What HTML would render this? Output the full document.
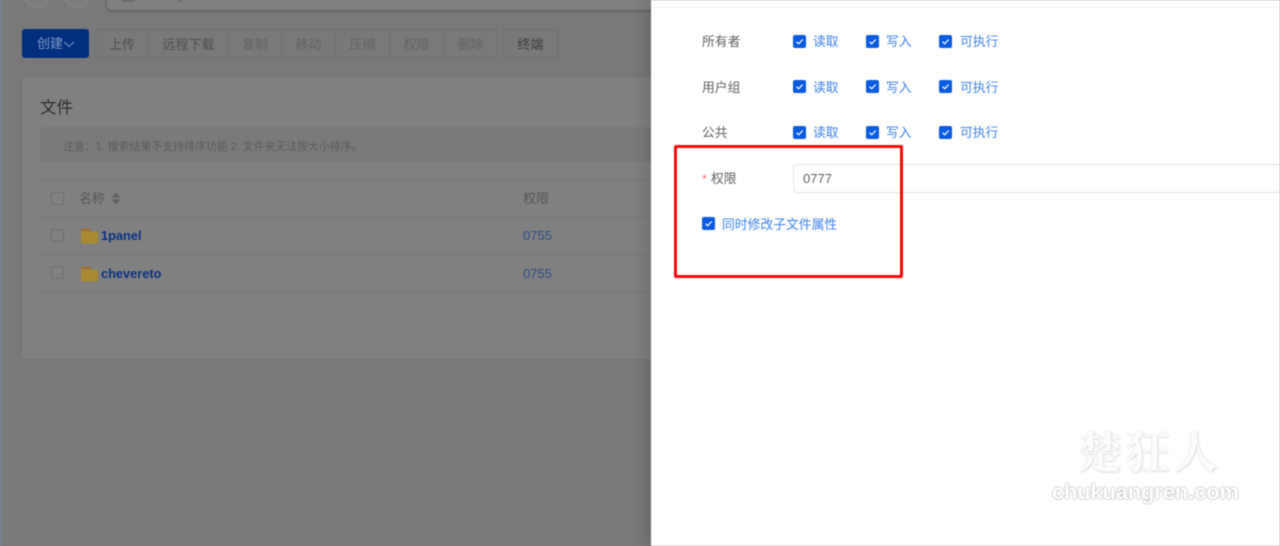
<!DOCTYPE html>
<html lang="zh">
<head>
<meta charset="utf-8">
<style>
html,body{margin:0;padding:0;background:#797979}
body{width:1280px;height:546px;overflow:hidden;position:relative;font-family:"Liberation Sans","Noto Sans CJK SC",sans-serif;font-size:13px}
div,span{position:absolute;box-sizing:border-box;white-space:nowrap}
#wrap{left:0;top:0;width:1280px;height:546px;overflow:hidden;background:#797979;filter:blur(.4px)}
#strip{left:0;top:0;width:3px;height:546px;background:linear-gradient(90deg,#78869c,#797979)}
.circ{top:-18px;width:26px;height:26px;border:1px solid #888;border-radius:50%;background:#7d7d7d}
#search{left:107px;top:-20px;width:560px;height:30px;background:#808080;border-radius:5px;box-shadow:0 1px 3px rgba(0,0,0,.3)}
.mark{top:0;height:2px;background:#6c6c6c}
#create{left:22px;top:29px;width:67px;height:29px;background:#012f80;border-radius:3px;color:#7f9ac6;line-height:29px;padding-left:15px;font-size:13px}
.gbtn{top:29px;height:29px;border:1px solid #707070;border-left:none;line-height:29px;text-align:center;font-size:13px;color:#4f4f4f}
.dis{color:#636363}
#card{left:22px;top:77px;width:640px;height:282px;background:#808080;border-radius:4px;box-shadow:0 0 2px rgba(0,0,0,.08)}
#title{left:40px;top:98px;font-size:16.500px;line-height:20px;color:#2e2e2e}
#note{left:40px;top:127px;width:620px;height:35px;background:#7a7a7a;border-radius:3px}
#notet{left:63px;top:140px;font-size:10.900px;line-height:14px;color:#5c5c5c}
.line{left:40px;width:620px;height:1px;background:#747474}
.cb{left:51px;width:13px;height:13px;border:1px solid #6e6e6e;border-radius:2px;background:#808080}
.th{top:191px;font-size:13px;line-height:16px;color:#575757}
.name{left:101px;font-size:12.800px;font-weight:bold;line-height:16px;color:#0b3284}
.perm{left:523px;font-size:13px;line-height:16px;color:#2e4d85}
#drawer{left:651px;top:0;width:629px;height:546px;background:#fff;box-shadow:-6px 0 14px rgba(0,0,0,.14)}
#dline{left:651px;top:7px;width:629px;height:1px;background:#f0f0f2}
.lab{left:702px;font-size:12.800px;line-height:16px;color:#606266}
.ck{width:13px;height:13px;background:#0a5be0;border-radius:2px}
.ck svg{position:absolute;left:0;top:0}
.ct{font-size:12.800px;line-height:16px;color:#3f82ee}
#input{left:793px;top:164px;width:500px;height:29px;border:1px solid #e0e2e8;border-radius:4px}
#inputt{left:803px;top:171px;font-size:13px;line-height:16px;color:#606266}
#star{left:702px;top:171px;font-size:12px;line-height:16px;color:#f56c6c}
#red{left:674px;top:145px;width:229px;height:133px;border:3px solid #f80808;border-radius:2px}
#wm1{left:1078px;top:423px;font-family:"Noto Serif CJK SC",serif;font-size:44px;line-height:52px;letter-spacing:4px;font-weight:bold;color:#fcfcfc;text-shadow:0 0 2px #dcdcdc,1px 1px 2px #e0e0e0}
#wm2{left:1052px;top:480px;font-family:"Liberation Sans",sans-serif;font-size:21.700px;line-height:24px;font-weight:bold;color:#fff;text-shadow:0 0 2px #aaa,0 0 1px #aaa}
</style>
</head>
<body>
<div id="wrap">
<div id="strip"></div>
<div class="circ" style="left:24px"></div>
<div class="circ" style="left:64px"></div>
<div id="search"></div>
<div class="mark" style="left:122px;width:13px"></div>
<div class="mark" style="left:178px;width:3px"></div>
<div id="create">创建<svg style="position:absolute;left:41px;top:12px" width="12" height="7" viewBox="0 0 12 7"><path d="M1 1l5 4.500 5-4.500" fill="none" stroke="#7f9ac6" stroke-width="1"/></svg></div>
<div class="gbtn" style="left:95px;width:54px;border-left:1px solid #707070;border-radius:3px 0 0 3px">上传</div>
<div class="gbtn" style="left:149px;width:80px">远程下载</div>
<div class="gbtn dis" style="left:229px;width:53px">复制</div>
<div class="gbtn dis" style="left:282px;width:54px">移动</div>
<div class="gbtn dis" style="left:336px;width:54px">压缩</div>
<div class="gbtn dis" style="left:390px;width:54px">权限</div>
<div class="gbtn dis" style="left:444px;width:54px;border-radius:0 3px 3px 0">删除</div>
<div class="gbtn" style="left:503px;width:55px;border-left:1px solid #707070;border-radius:3px;color:#3c3c3c">终端</div>

<div id="card"></div>
<div id="title">文件</div>
<div id="note"></div>
<div id="notet">注意：1. 搜索结果不支持排序功能 2. 文件夹无法按大小排序。</div>
<div class="line" style="top:180px"></div>
<div class="line" style="top:217px"></div>
<div class="line" style="top:254px"></div>
<div class="line" style="top:292px"></div>
<div class="cb" style="top:192px"></div>
<div class="cb" style="top:229px"></div>
<div class="cb" style="top:266px"></div>
<div class="th" style="left:79px">名称</div>
<svg style="position:absolute;left:111px;top:193px" width="10" height="11" viewBox="0 0 10 11"><path d="M5 0L9 4.500H1zM5 11L9 6.500H1z" fill="#5e5e5e"/></svg>
<div class="th" style="left:523px">权限</div>
<svg style="position:absolute;left:81px;top:228px" width="17" height="16" viewBox="0 0 17 16"><path d="M0 2.500Q0 .5 2 .5H8Q10 .5 10 3H0z" fill="#a0702a"/><path d="M0 3.500H14.500Q17 3.500 17 6V13.500Q17 15.500 15 15.500H2Q0 15.500 0 13.500z" fill="#a88a30"/></svg>
<svg style="position:absolute;left:81px;top:266px" width="17" height="16" viewBox="0 0 17 16"><path d="M0 2.500Q0 .5 2 .5H8Q10 .5 10 3H0z" fill="#a0702a"/><path d="M0 3.500H14.500Q17 3.500 17 6V13.500Q17 15.500 15 15.500H2Q0 15.500 0 13.500z" fill="#a88a30"/></svg>
<div class="name" style="top:228px">1panel</div>
<div class="name" style="top:266px">chevereto</div>
<div class="perm" style="top:228px">0755</div>
<div class="perm" style="top:266px">0755</div>

<div id="drawer"></div>
<div id="dline"></div>

<div class="lab" style="top:34px">所有者</div>
<div class="ck" style="left:793px;top:35px"><svg width="13" height="13" viewBox="0 0 13 13"><path d="M3.500 6.700l2.200 2.100 4-4.300" fill="none" stroke="#fff" stroke-width="1.200"/></svg></div>
<div class="ct" style="left:813px;top:34px">读取</div>
<div class="ck" style="left:866px;top:35px"><svg width="13" height="13" viewBox="0 0 13 13"><path d="M3.500 6.700l2.200 2.100 4-4.300" fill="none" stroke="#fff" stroke-width="1.200"/></svg></div>
<div class="ct" style="left:886px;top:34px">写入</div>
<div class="ck" style="left:939px;top:35px"><svg width="13" height="13" viewBox="0 0 13 13"><path d="M3.500 6.700l2.200 2.100 4-4.300" fill="none" stroke="#fff" stroke-width="1.200"/></svg></div>
<div class="ct" style="left:960px;top:34px">可执行</div>

<div class="lab" style="top:80px">用户组</div>
<div class="ck" style="left:793px;top:80px"><svg width="13" height="13" viewBox="0 0 13 13"><path d="M3.500 6.700l2.200 2.100 4-4.300" fill="none" stroke="#fff" stroke-width="1.200"/></svg></div>
<div class="ct" style="left:813px;top:80px">读取</div>
<div class="ck" style="left:866px;top:80px"><svg width="13" height="13" viewBox="0 0 13 13"><path d="M3.500 6.700l2.200 2.100 4-4.300" fill="none" stroke="#fff" stroke-width="1.200"/></svg></div>
<div class="ct" style="left:886px;top:80px">写入</div>
<div class="ck" style="left:939px;top:80px"><svg width="13" height="13" viewBox="0 0 13 13"><path d="M3.500 6.700l2.200 2.100 4-4.300" fill="none" stroke="#fff" stroke-width="1.200"/></svg></div>
<div class="ct" style="left:960px;top:80px">可执行</div>

<div class="lab" style="top:125px">公共</div>
<div class="ck" style="left:793px;top:126px"><svg width="13" height="13" viewBox="0 0 13 13"><path d="M3.500 6.700l2.200 2.100 4-4.300" fill="none" stroke="#fff" stroke-width="1.200"/></svg></div>
<div class="ct" style="left:813px;top:125px">读取</div>
<div class="ck" style="left:866px;top:126px"><svg width="13" height="13" viewBox="0 0 13 13"><path d="M3.500 6.700l2.200 2.100 4-4.300" fill="none" stroke="#fff" stroke-width="1.200"/></svg></div>
<div class="ct" style="left:886px;top:125px">写入</div>
<div class="ck" style="left:939px;top:126px"><svg width="13" height="13" viewBox="0 0 13 13"><path d="M3.500 6.700l2.200 2.100 4-4.300" fill="none" stroke="#fff" stroke-width="1.200"/></svg></div>
<div class="ct" style="left:960px;top:125px">可执行</div>

<div id="star">*</div>
<div class="lab" style="left:711px;top:171px">权限</div>
<div id="input"></div>
<div id="inputt">0777</div>
<div class="ck" style="left:702px;top:217px"><svg width="13" height="13" viewBox="0 0 13 13"><path d="M3.500 6.700l2.200 2.100 4-4.300" fill="none" stroke="#fff" stroke-width="1.200"/></svg></div>
<div class="ct" style="left:722px;top:217px">同时修改子文件属性</div>
<div id="red"></div>

<div id="wm1">楚狂人</div>
<div id="wm2">chukuangren.com</div>
</div>
</body>
</html>
